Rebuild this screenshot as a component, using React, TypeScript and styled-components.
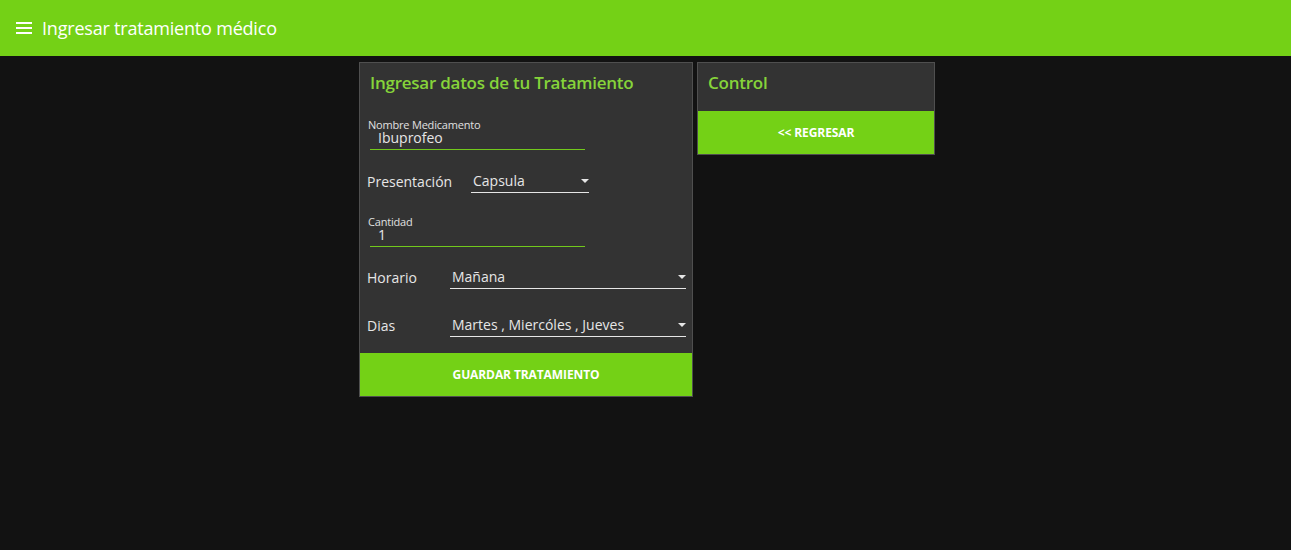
import React from 'react';
import styled, { createGlobalStyle } from 'styled-components';

const GlobalStyle = createGlobalStyle`
  html, body {
    margin: 0;
    padding: 0;
    background: #121212;
  }
  body {
    font-family: 'Open Sans', 'Noto Sans', sans-serif;
    color: #e6e6e6;
  }
`;

const AppBar = styled.header`
  height: 56px;
  background: #74d116;
  display: flex;
  align-items: center;
  padding-left: 16px;
  gap: 10px;
  color: #fff;
  font-size: 18px;
  letter-spacing: -0.2px;
`;

const Burger = styled.span`
  display: flex;
  flex-direction: column;
  gap: 3px;
  width: 16px;
  span {
    height: 2px;
    background: #fff;
  }
`;

const Page = styled.main`
  display: flex;
  justify-content: center;
  align-items: flex-start;
  gap: 4px;
  padding-top: 6px;
  padding-left: 3px;
`;

const Card = styled.section<{ $width: number }>`
  width: ${(p) => p.$width}px;
  box-sizing: border-box;
  background: #333333;
  border: 1px solid #4f4f4f;
  display: flex;
  flex-direction: column;
`;

const CardTitle = styled.h2`
  margin: 0;
  height: 48px;
  box-sizing: border-box;
  padding: 9px 0 0 10px;
  font-size: 17px;
  line-height: 22px;
  font-weight: 600;
  color: #86d43a;
  letter-spacing: -0.25px;
`;

const Form = styled.form`
  display: flex;
  flex-direction: column;
`;

const TextField = styled.label<{ $top: number }>`
  display: flex;
  flex-direction: column;
  width: 215px;
  margin: ${(p) => p.$top}px 0 0 10px;
  .caption {
    font-size: 11px;
    line-height: 10px;
    color: #e0e0e0;
    margin-left: -2px;
    letter-spacing: -0.2px;
  }
  .value {
    font-size: 14px;
    line-height: 16px;
    padding: 0 0 3px 8px;
    border-bottom: 1px solid #72c91c;
    color: #e6e6e6;
  }
`;

const SelectRow = styled.div<{ $top: number; $labelWidth: number }>`
  display: flex;
  align-items: flex-end;
  margin: ${(p) => p.$top}px 0 0 7px;
  .label {
    width: ${(p) => p.$labelWidth}px;
    font-size: 14px;
    line-height: 16px;
    padding-bottom: 3px;
  }
`;

const Select = styled.div<{ $width: number }>`
  width: ${(p) => p.$width}px;
  display: flex;
  align-items: center;
  justify-content: space-between;
  font-size: 14px;
  line-height: 16px;
  padding: 0 0 3px 2px;
  border-bottom: 1px solid #e6e6e6;
  box-sizing: border-box;
  &::after {
    content: '';
    border-left: 4px solid transparent;
    border-right: 4px solid transparent;
    border-top: 4px solid #e6e6e6;
  }
`;

const ActionButton = styled.button<{ $top: number }>`
  margin-top: ${(p) => p.$top}px;
  height: 43px;
  border: none;
  background: #74d116;
  color: #fff;
  font-family: inherit;
  font-size: 12px;
  font-weight: 700;
  letter-spacing: -0.1px;
  cursor: pointer;
`;

function App() {
  return (
    <>
      <GlobalStyle />
      <AppBar>
        <Burger>
          <span />
          <span />
          <span />
        </Burger>
        Ingresar tratamiento médico
      </AppBar>
      <Page>
        <Card $width={334}>
          <CardTitle>Ingresar datos de tu Tratamiento</CardTitle>
          <Form>
            <TextField $top={9}>
              <span className="caption">Nombre Medicamento</span>
              <span className="value">Ibuprofeo</span>
            </TextField>
            <SelectRow $top={23} $labelWidth={104}>
              <span className="label">Presentación</span>
              <Select $width={118}>Capsula</Select>
            </SelectRow>
            <TextField $top={24}>
              <span className="caption">Cantidad</span>
              <span className="value">1</span>
            </TextField>
            <SelectRow $top={22} $labelWidth={83}>
              <span className="label">Horario</span>
              <Select $width={236}>Mañana</Select>
            </SelectRow>
            <SelectRow $top={28} $labelWidth={83}>
              <span className="label">Dias</span>
              <Select $width={236}>Martes , Miercóles , Jueves</Select>
            </SelectRow>
            <ActionButton type="button" $top={16}>
              GUARDAR TRATAMIENTO
            </ActionButton>
          </Form>
        </Card>
        <Card $width={238}>
          <CardTitle>Control</CardTitle>
          <ActionButton type="button" $top={0}>
            &lt;&lt; REGRESAR
          </ActionButton>
        </Card>
      </Page>
    </>
  );
}

export default App;
